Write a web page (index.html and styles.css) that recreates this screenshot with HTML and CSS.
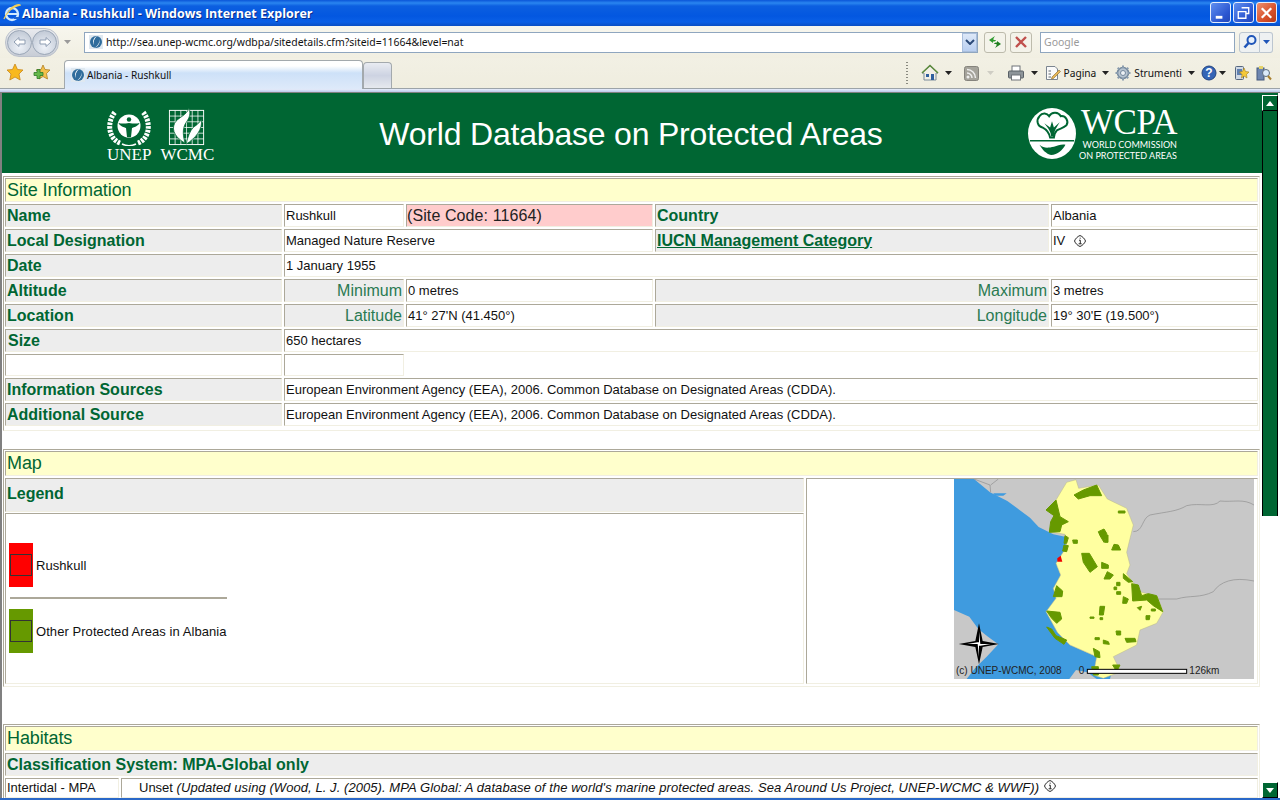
FILE: index.html
```html
<!DOCTYPE html>
<html lang="it">
<head>
<meta charset="utf-8">
<title>Albania - Rushkull - Windows Internet Explorer</title>
<link rel="stylesheet" href="styles.css">
</head>
<body>
<svg class="defs" width="0" height="0" aria-hidden="true">
  <defs>
    <symbol id="fav" viewBox="0 0 16 16">
      <rect x="1" y="1" width="14" height="14" fill="#dfe8f0"/>
      <circle cx="8" cy="8" r="6" fill="#2f6c9c"/>
      <path d="M9 2C6 5 5 8 6 11C4 8 5 4 9 2ZM11 5C12 8 10 12 6 14C9 13 13 10 11 5Z" fill="#fff"/>
    </symbol>
    <symbol id="info" viewBox="0 0 12 12">
      <path d="M6 .5C8.500 1.500 10.500 3.500 11.500 6C10.500 8.500 8.500 10.500 6 11.500C3.500 10.500 1.500 8.500 .5 6C1.500 3.500 3.500 1.500 6 .5Z" fill="#fff" stroke="#111" stroke-width=".9"/>
      <path d="M5 5.200H6.300V8.700M4.600 8.800H7.700M5.700 3.200H6.700" fill="none" stroke="#111" stroke-width=".9"/>
    </symbol>
    <symbol id="drop" viewBox="0 0 7 4"><path d="M0 0H7L3.500 4Z"/></symbol>
  </defs>
</svg>
<div class="window">
  <header class="titlebar">
    <svg class="ie" viewBox="0 0 18 18" width="18" height="18"><circle cx="9" cy="10" r="6" fill="none" stroke="#cfe9ff" stroke-width="2.400"/><path d="M3 10H15" stroke="#cfe9ff" stroke-width="2"/><path d="M1 15C3 9 10 2 17 1C15 0 11 2 7 5" fill="none" stroke="#f2cf5a" stroke-width="1.300"/><path d="M11 14H16" stroke="#1d63d0" stroke-width="2"/></svg>
    <span class="title-text">Albania - Rushkull - Windows Internet Explorer</span>
    <div class="winbtns">
      <span class="winbtn"><svg viewBox="0 0 20 20" width="20" height="20"><rect x="5" y="13" width="7" height="3" fill="#fff"/></svg></span>
      <span class="winbtn"><svg viewBox="0 0 20 20" width="20" height="20"><path d="M8 4.500H15.500V10.500H13M4.500 8.500H12.500V15.500H4.500Z" fill="none" stroke="#fff" stroke-width="1.400"/></svg></span>
      <span class="winbtn close"><svg viewBox="0 0 20 20" width="20" height="20"><path d="M5 5L15 15M15 5L5 15" stroke="#fff" stroke-width="2.400"/></svg></span>
    </div>
  </header>

  <div class="navrow">
    <div class="navpill">
      <span class="roundbtn"><svg viewBox="0 0 20 20" width="20" height="20"><path d="M4 10L9 5.500V8H15V12H9V14.500Z" fill="#fff" stroke="#8e9db2"/></svg></span>
      <span class="roundbtn"><svg viewBox="0 0 20 20" width="20" height="20"><path d="M16 10L11 5.500V8H5V12H11V14.500Z" fill="#fff" stroke="#8e9db2"/></svg></span>
    </div>
    <svg class="navdrop" width="7" height="4"><use href="#drop" fill="#9a9a9a"/></svg>
    <div class="address">
      <svg width="16" height="16"><use href="#fav"/></svg>
      <span class="url">http://sea.unep-wcmc.org/wdbpa/sitedetails.cfm?siteid=11664&amp;level=nat</span>
      <span class="addr-drop"><svg viewBox="0 0 10 6" width="10" height="6"><path d="M1 1L5 5L9 1" fill="none" stroke="#2c4a78" stroke-width="2"/></svg></span>
    </div>
    <span class="squarebtn refresh"><svg viewBox="0 0 20 18" width="20" height="18"><path d="M10 3L4 7L8 10V8.500C10 8.500 10.500 8 11 7H8.500V5.500Z" fill="#2f9a2f"/><path d="M10 15L16 11L12 8V9.500C10 9.500 9.500 10 9 11H11.500V12.500Z" fill="#1f7f1f"/></svg></span>
    <span class="squarebtn stop"><svg viewBox="0 0 20 18" width="20" height="18"><path d="M5 4L15 14M15 4L5 14" stroke="#c0504d" stroke-width="2.400"/></svg></span>
    <div class="search"><span>Google</span></div>
    <span class="searchbtn"><svg viewBox="0 0 18 18" width="18" height="18"><circle cx="10.500" cy="7" r="4" fill="#e8f1fb" stroke="#1f55b8" stroke-width="2"/><path d="M7.500 10L3.500 14.500" stroke="#1f55b8" stroke-width="2.600"/></svg></span>
    <span class="searchdrop"><svg width="7" height="4"><use href="#drop" fill="#1f55b8"/></svg></span>
  </div>

  <div class="tabrow">
    <svg class="fav-star" viewBox="0 0 18 18" width="18" height="18"><path d="M9 1L11.500 6.500L17 7L13 11L14.200 17L9 14L3.800 17L5 11L1 7L6.500 6.500Z" fill="#f9b91e" stroke="#c8861a" stroke-width=".8"/></svg>
    <svg class="add-star" viewBox="0 0 18 18" width="18" height="18"><path d="M10 2L12 6.500L17 7L13.500 10.500L14.500 16L10 13.500L6 16L7 10.500L3 7L8 6.500Z" fill="#f4c04a" stroke="#b08024" stroke-width=".8"/><path d="M1 9.500H4V6.500H7V9.500H10V12.500H7V15.500H4V12.500H1Z" fill="#66b84a" stroke="#2f7a2a" stroke-width=".8"/></svg>
    <div class="tab active">
      <svg width="16" height="16"><use href="#fav"/></svg>
      <span>Albania - Rushkull</span>
    </div>
    <div class="tab newtab"></div>
    <div class="cmdbar">
      <span class="grip"></span>
      <span class="cmd home"><svg viewBox="0 0 18 18" width="18" height="18"><path d="M1 9L9 1.500L17 9H15V16H3V9Z" fill="#f2efe6" stroke="#7c8b99"/><path d="M1 9L9 1.500L17 9" fill="none" stroke="#5b8a3c" stroke-width="1.600"/><rect x="5" y="10" width="3" height="3" fill="#2f5f9e"/><rect x="10" y="10" width="3" height="6" fill="#2f5f9e"/></svg><svg class="caret" width="7" height="4"><use href="#drop" fill="#222"/></svg></span>
      <span class="cmd rss"><svg viewBox="0 0 15 15" width="15" height="15"><rect width="14" height="14" x=".5" y=".5" rx="2" fill="#a5a39b" stroke="#85837c"/><circle cx="4" cy="11" r="1.500" fill="#eee"/><path d="M3 7A5 5 0 0 1 8 12M3 3.500A8.500 8.500 0 0 1 11.500 12" fill="none" stroke="#eee" stroke-width="1.500"/></svg><svg class="caret" width="7" height="4"><use href="#drop" fill="#cfcdc4"/></svg></span>
      <span class="cmd print"><svg viewBox="0 0 18 18" width="18" height="18"><rect x="5" y="2" width="8" height="6" fill="#fff" stroke="#6e7378"/><rect x="1.500" y="7" width="15" height="7" rx="1" fill="#8d9499" stroke="#596066"/><rect x="4.500" y="11" width="9" height="5" fill="#fff" stroke="#6e7378"/></svg><svg class="caret" width="7" height="4"><use href="#drop" fill="#222"/></svg></span>
      <span class="cmd pagecmd"><svg viewBox="0 0 16 16" width="16" height="16"><path d="M1.500 1.500H10L12.500 4V14.500H1.500Z" fill="#fafafa" stroke="#7b8590"/><path d="M3.500 6H6M3.500 9H6M3.500 12H6" stroke="#5c6670"/><path d="M7 12L14 5L15.500 6.500L8.500 13.500L6.500 14Z" fill="#e6b656" stroke="#8a6a2a" stroke-width=".6"/></svg><span class="cmd-label">Pagina</span><svg class="caret" width="7" height="4"><use href="#drop" fill="#222"/></svg></span>
      <span class="cmd tools"><svg viewBox="0 0 16 16" width="16" height="16"><circle cx="8" cy="8" r="5.500" fill="#b7c4d1" stroke="#74889c" stroke-width="1.500"/><circle cx="8" cy="8" r="2.500" fill="#eef2f6" stroke="#74889c"/><path d="M8 .5V3M8 13V15.500M.5 8H3M13 8H15.500M2.700 2.700L4.400 4.400M11.600 11.600L13.300 13.300M13.300 2.700L11.600 4.400M4.400 11.600L2.700 13.300" stroke="#8a9cae" stroke-width="2"/></svg><span class="cmd-label">Strumenti</span><svg class="caret" width="7" height="4"><use href="#drop" fill="#222"/></svg></span>
      <span class="cmd help"><svg viewBox="0 0 16 16" width="16" height="16"><circle cx="8" cy="8" r="7" fill="#3565b6" stroke="#23437e"/><text x="8" y="12" text-anchor="middle" class="help-q">?</text></svg><svg class="caret" width="7" height="4"><use href="#drop" fill="#222"/></svg></span>
      <span class="cmd ext"><svg viewBox="0 0 16 16" width="16" height="16"><rect x="1.500" y="1.500" width="8" height="13" rx="1" fill="#cfd8e4" stroke="#56677f"/><rect x="3" y="4" width="5" height="6" fill="#5f7fb0"/><path d="M10 3L11.500 6.500L15 7L12.500 9.500L13 13L10 11L7.500 13L8 9.500L5.500 7L8.500 6.500Z" fill="#f5c93a" stroke="#a57f1c" stroke-width=".6"/></svg></span>
      <span class="cmd ext ext2"><svg viewBox="0 0 16 16" width="16" height="16"><rect x="1" y="3" width="7" height="12" fill="#6e86b0" stroke="#45597c"/><rect x="3" y="1" width="4" height="3" fill="#e5d36a"/><circle cx="10" cy="8" r="3.500" fill="#dbeafa" stroke="#5c6c7e"/><path d="M12 11L15 14.500" stroke="#a9802f" stroke-width="2"/></svg></span>
    </div>
  </div>
  <div class="tabline"></div>

  <div class="viewport">
    <main class="content">
      <div class="banner">
        <div class="logos-left">
          <div class="logo-unep">
            <svg viewBox="0 0 44 38" width="44" height="38">
              <path d="M13 35C2 31 -1 15 8 4" fill="none" stroke="#fff" stroke-width="5" stroke-dasharray="2.600 1.100"/>
              <path d="M31 35C42 31 45 15 36 4" fill="none" stroke="#fff" stroke-width="5" stroke-dasharray="2.600 1.100"/>
              <circle cx="22" cy="18" r="11.500" fill="#fff"/>
              <circle cx="22" cy="11.500" r="2.200" fill="#006633"/>
              <path d="M11.500 15C15 16 18 15.500 22 15C26 15.500 29 16 32.500 15C31 18.500 27 19 25 20L24 29H20L19 20C17 19 13 18.500 11.500 15Z" fill="#006633"/>
              <path d="M15 36C19 38 25 38 29 36" fill="none" stroke="#fff" stroke-width="1.600"/>
            </svg>
            <span>UNEP</span>
          </div>
          <div class="logo-wcmc">
            <svg viewBox="0 -2 38 40" width="38" height="38">
              <rect x=".5" y=".5" width="36" height="36" fill="none" stroke="#fff"/>
              <path d="M.5 6.500H36.500M.5 12.500H36.500M.5 18.500H36.500M.5 24.500H36.500M.5 30.500H36.500M6.500 .5V36.500M12.500 .5V36.500M18.500 .5V36.500M24.500 .5V36.500M30.500 .5V36.500" stroke="#fff" stroke-width=".8"/>
              <path d="M21 -2C24 6 20 10 17 15C14 21 15 28 17 35C8 30 2 22 6 14C9 8 19 6 21 -2Z" fill="#fff" stroke="#006633" stroke-width=".8"/>
              <path d="M34 10C36 20 28 30 18 36C20 28 22 22 26 18C29 16 32 14 34 10Z" fill="#fff" stroke="#006633" stroke-width=".8"/>
            </svg>
            <span>WCMC</span>
          </div>
        </div>
        <h1>World Database on Protected Areas</h1>
        <div class="logo-wcpa">
          <svg viewBox="0 0 50 50" width="48" height="51" preserveAspectRatio="none"><circle cx="25" cy="25" r="25" fill="#fff"/><path d="M23 29C22 24 19 21 15 19C10 18 8 12 12 8C15 4 20 5 22 8C25 3 32 4 34 8C39 7 43 13 40 17C37 20 33 20 30 22C28 24 27 26 27 29Z" fill="none" stroke="#006633" stroke-width="2"/><path d="M24 28C24 23 21 20 17 15L23 19L25 13L27 19L33 14C30 19 27 22 27 28Z" fill="#006633"/><path d="M2 32H48" stroke="#006633" stroke-width="1.500"/><path d="M12 36C17 40 21 39 27 38C31 37 35 35 39 36C36 41 31 46 24 46C19 45 15 41 12 36Z" fill="#006633"/></svg>
          <div class="wcpa-text">
            <span class="wcpa-big">WCPA</span>
            <span class="wcpa-small">WORLD COMMISSION</span>
            <span class="wcpa-small">ON PROTECTED AREAS</span>
          </div>
        </div>
      </div>

      <section class="panel info-panel">
        <h2 class="cell band span-all">Site Information</h2>
        <div class="cell label">Name</div>
        <div class="cell val">Rushkull</div>
        <div class="cell code">(Site Code: 11664)</div>
        <div class="cell label">Country</div>
        <div class="cell val">Albania</div>

        <div class="cell label">Local Designation</div>
        <div class="cell val span-2">Managed Nature Reserve</div>
        <div class="cell label"><a href="#iucn">IUCN Management Category</a></div>
        <div class="cell val">IV <svg class="info-ic" width="12" height="12"><use href="#info"/></svg></div>

        <div class="cell label">Date</div>
        <div class="cell val span-4">1 January 1955</div>

        <div class="cell label">Altitude</div>
        <div class="cell sub">Minimum</div>
        <div class="cell val">0 metres</div>
        <div class="cell sub">Maximum</div>
        <div class="cell val">3 metres</div>

        <div class="cell label">Location</div>
        <div class="cell sub">Latitude</div>
        <div class="cell val">41° 27'N (41.450°)</div>
        <div class="cell sub">Longitude</div>
        <div class="cell val">19° 30'E (19.500°)</div>

        <div class="cell label size-label">Size</div>
        <div class="cell val span-4">650 hectares</div>

        <div class="cell val blank"></div>
        <div class="cell val blank"></div>

        <div class="cell label row-start">Information Sources</div>
        <div class="cell val span-4">European Environment Agency (EEA), 2006. Common Database on Designated Areas (CDDA).</div>

        <div class="cell label">Additional Source</div>
        <div class="cell val span-4">European Environment Agency (EEA), 2006. Common Database on Designated Areas (CDDA).</div>
      </section>

      <section class="panel map-panel">
        <h2 class="cell band map-band">Map</h2>
        <div class="map-left">
          <div class="cell label legend-head">Legend</div>
          <div class="cell legend-box">
            <div class="legend">
              <div class="legend-row">
                <span class="swatch red"><i></i></span>
                <span>Rushkull</span>
              </div>
              <div class="legend-rule"></div>
              <div class="legend-row">
                <span class="swatch green"><i></i></span>
                <span>Other Protected Areas in Albania</span>
              </div>
            </div>
          </div>
        </div>
        <div class="cell map-cell">
          <svg class="map" viewBox="12 12 900 600" width="300" height="200">
            <rect x="12" y="12" width="900" height="600" fill="#c8c8c8"/>
            <path d="M12 12H72L120 52L172 78L240 128L266 156L310 178L345 185L348 225L320 270L332 300L315 400L325 475L360 510L440 545L490 570L480 612H12Z" fill="#3f9bdf"/>
            <path d="M12 405L58 425L85 462L112 484L145 508L110 545L75 580L50 612H12Z" fill="#c8c8c8"/>
            <path d="M358 612L378 585L412 592L440 612Z" fill="#c8c8c8"/>
            <path d="M130 55H170L160 62H135Z" fill="#3f9bdf"/>
            <path d="M72 12L120 30L122 52M145 12L122 30M550 170C580 170 575 130 600 120C650 110 680 110 710 92C750 82 790 100 810 78C850 82 880 70 912 90M625 372H680C720 360 750 370 790 350C810 320 850 305 912 318" fill="none" stroke="#8e8e8e" stroke-width="2"/>
            <path d="M318 75L350 22L378 14L386 40L445 30L472 72L530 100L550 150L530 232L540 270L530 296L570 350L622 365L640 410L620 445L570 465L560 510L490 545L512 590L460 610L430 600L440 545L360 510L322 472L288 410L318 370L310 340L332 300L318 265L350 215L345 178L298 170L312 120L288 105Z" fill="#ffffa0" stroke="#b9b98a" stroke-width="1.500"/>
            <g class="pa">
              <path d="M372 60L400 45L440 30L455 62L420 62L385 72Z"/>
              <path d="M288 105L318 75L330 125L355 140L335 150L330 170L298 172L302 140L312 122Z"/>
              <path d="M345 182L355 188L350 205L342 205ZM342 210L355 212L350 230L338 228Z"/>
              <path d="M445 170L462 162L470 175L462 202L450 182Z"/>
              <path d="M368 195H382V205H370Z"/>
              <path d="M492 208L505 210L512 225L485 225Z"/>
              <path d="M395 235L418 235L442 275L420 292L400 262Z"/>
              <path d="M455 262L475 270L475 280L455 280Z"/>
              <path d="M472 290L490 300L480 312L462 312Z"/>
              <path d="M520 296L548 320L535 322L520 310Z"/>
              <path d="M545 326L565 330L575 362L595 356L620 362L638 410L610 392L590 375L548 378Z"/>
              <path d="M320 332L338 348L336 365L310 365Z"/>
              <path d="M290 408L330 412L335 432L320 445L305 430Z"/>
              <path d="M290 456L305 462L318 482L350 495L342 508L315 490Z"/>
              <path d="M450 394L464 394L460 420H448Z"/>
              <path d="M520 365L535 372L530 385L518 385Z"/>
              <path d="M525 490L555 490L558 500L530 502Z"/>
              <path d="M460 495L475 500L478 508L460 506Z"/>
              <path d="M430 520L448 530L450 548L435 545Z"/>
              <path d="M498 468H512V480H500Z"/>
              <path d="M588 422L600 422L598 434H588Z"/>
              <path d="M425 575H445V600H430ZM488 570H510L500 590Z"/>
              <path d="M500 322H510V332H500ZM492 336H500V344H492ZM500 350H512V358H500ZM435 488H448V494H435ZM562 398L575 394L570 406ZM604 402H616V408H604ZM420 426H432V430H420ZM450 428H458V434H450ZM505 108H525V114H505ZM468 180H474V202H464Z"/>
            </g>
            <path d="M322 250L332 242L337 260H322Z" fill="#ee0000"/>
            <path d="M87 445L98 498L147 507L98 516L87 568L76 516L26 507L76 498Z" fill="#000"/>
            <path d="M87 470L91 507H122L91 512H87ZM87 545L83 507H52L83 502H87Z" fill="#fff"/>
            <rect x="412" y="583" width="298" height="12" fill="#fff" stroke="#000" stroke-width="3"/>
            <text x="18" y="597" class="map-text">(c) UNEP-WCMC, 2008</text>
            <text x="386" y="597" class="map-text">0</text>
            <text x="718" y="597" class="map-text">126km</text>
          </svg>
        </div>
      </section>

      <section class="panel hab-panel">
        <h2 class="cell band">Habitats</h2>
        <div class="cell label class-head">Classification System: MPA-Global only</div>
        <div class="hab-row">
          <div class="cell val hab-name">Intertidal - MPA</div>
          <div class="cell val hab-desc">Unset <em>(Updated using (Wood, L. J. (2005). MPA Global: A database of the world's marine protected areas. Sea Around Us Project, UNEP-WCMC &amp; WWF))</em> <svg class="info-ic" width="12" height="12"><use href="#info"/></svg></div>
        </div>
      </section>
    </main>
    <aside class="scrollbar">
      <span class="sb-btn"><svg viewBox="0 0 8 5" width="8" height="5"><path d="M0 5H8L4 0Z" fill="#fff"/></svg></span>
      <span class="sb-thumb"></span>
      <span class="sb-rest"></span>
      <span class="sb-btn"><svg viewBox="0 0 8 5" width="8" height="5"><path d="M0 0H8L4 5Z" fill="#fff"/></svg></span>
    </aside>
  </div>
</div>
</body>
</html>
```

FILE: styles.css
```css
* { box-sizing: border-box; }
html, body { margin: 0; padding: 0; height: 100%; overflow: hidden; background: #fff; }
body { font-family: "Liberation Sans", Arial, sans-serif; font-size: 13px; color: #111; }
.defs { position: absolute; }
.window { width: 1280px; height: 800px; display: flex; flex-direction: column; overflow: hidden; border-bottom: 2px solid #2a68c8; }

.titlebar { height: 26px; flex: none; display: flex; align-items: center; padding: 0 3px; background: linear-gradient(#0a55d8 0, #2a86f0 3px, #0c5fe0 6px, #0357e0 16px, #0a5fe6 22px, #0a4fc4 26px); }
.ie { flex: none; }
.title-text { margin-left: 1px; font-family: "Open Sans", "DejaVu Sans", sans-serif; font-weight: 700; font-size: 12.5px; color: #fff; text-shadow: 1px 1px 0 #0a2f8c; white-space: nowrap; }
.winbtns { margin-left: auto; display: flex; gap: 2px; margin-top: -1px; }
.winbtn { width: 21px; height: 21px; border: 1px solid #e6eefc; border-radius: 3px; background: linear-gradient(135deg, #5f8ff0, #2a55d0 70%, #2448b8); display: flex; align-items: center; justify-content: center; }
.winbtn.close { background: linear-gradient(135deg, #ec9070, #d8502a 60%, #b83a18); }

.navrow { height: 32px; flex: none; display: flex; align-items: center; padding: 1px 7px 1px 5px; background: linear-gradient(#f7f6ee, #f1efe2); }
.navpill { display: flex; padding: 1px; border-radius: 14px; background: linear-gradient(#e8eaee, #c8cdd6); border: 1px solid #bcc2cc; }
.roundbtn { width: 25px; height: 25px; border-radius: 50%; border: 1px solid #9aa6b6; background: radial-gradient(circle at 50% 70%, #eef2f8, #c3cbd7 80%); display: flex; align-items: center; justify-content: center; }
.navdrop { margin: 0 13px 0 5px; flex: none; }
.address { width: 894px; height: 21px; flex: none; display: flex; align-items: center; padding-left: 3px; background: #fff; border: 1px solid #8fa6bf; }
.url { margin-left: 2px; font-family: "Noto Sans", "DejaVu Sans", sans-serif; font-size: 10.45px; color: #111; white-space: nowrap; }
.addr-drop { margin-left: auto; width: 15px; height: 19px; background: linear-gradient(#dde8f8, #b9cff0); border: 1px solid #a9bedc; display: flex; align-items: center; justify-content: center; }
.squarebtn { width: 22px; height: 21px; flex: none; border: 1px solid #bdbbac; border-radius: 3px; background: #f4f3ea; display: flex; align-items: center; justify-content: center; }
.refresh { margin-left: 6px; }
.stop { margin-left: 4px; }
.search { width: 195px; height: 21px; margin-left: 8px; flex: none; display: flex; align-items: center; padding-left: 3px; background: #fff; border: 1px solid #8fa6bf; font-family: "Noto Sans", sans-serif; font-size: 10.5px; color: #9a9a9a; }
.searchbtn { width: 21px; height: 21px; margin-left: 4px; flex: none; border: 1px solid #bcc6d0; border-radius: 3px 0 0 3px; background: #eef1f2; display: flex; align-items: center; justify-content: center; }
.searchdrop { width: 13px; height: 21px; flex: none; border: 1px solid #bcc6d0; border-left: 0; border-radius: 0 3px 3px 0; background: #eef1f2; display: flex; align-items: center; justify-content: center; }

.tabrow { height: 31px; flex: none; display: flex; align-items: flex-end; padding: 0 8px 0 5px; background: linear-gradient(#f2f0e4, #efeddf); border-bottom: 1px solid #9ca3a8; }
.fav-star { margin: 0 9px 7px 1px; flex: none; }
.add-star { margin: 0 13px 7px 0; flex: none; }
.tab { flex: none; border: 1px solid #a3a9ad; border-bottom: 0; border-radius: 4px 4px 0 0; }
.tab.active { width: 299px; height: 29px; margin-bottom: -1px; display: flex; align-items: center; padding-left: 5px; gap: 1px; background: linear-gradient(#fff 0, #fff 5px, #cde1f8 12px, #dfeafa 29px); font-family: "Noto Sans", sans-serif; font-size: 10.1px; color: #111; position: relative; z-index: 1; }
.tab.newtab { width: 29px; height: 26px; background: linear-gradient(#e9ecf2, #cdd3e2 50%, #e6e9ee); }
.tabline { height: 3px; flex: none; background: linear-gradient(#e8eefb, #b9c8ea); }
.cmdbar { margin-left: auto; height: 30px; align-self: flex-start; display: flex; align-items: center; color: #111; }
.grip { width: 2px; height: 22px; margin-right: 13px; background-image: linear-gradient(#8a8a80 50%, transparent 50%); background-size: 2px 3px; }
.cmd { display: flex; align-items: center; }
.cmd-label { font-family: "Noto Sans", sans-serif; font-size: 10.2px; margin: 0 6px 0 3px; white-space: nowrap; }
.caret { flex: none; }
.home .caret { margin-left: 6px; }
.rss { margin-left: 12px; }
.rss .caret { margin-left: 8px; }
.print { margin-left: 13px; }
.print .caret { margin-left: 6px; }
.pagecmd { margin-left: 7px; }
.tools { margin-left: 6px; }
.help { margin-left: 6px; }
.help .caret { margin-left: 2px; }
.ext { margin-left: 8px; }
.ext2 { margin-left: 6px; }
.help-q { font-family: "Liberation Sans", sans-serif; font-weight: 700; font-size: 12px; fill: #fff; }

.viewport { flex: 1; min-height: 0; display: flex; background: #fff; border-left: 2px solid #808080; border-top: 1px solid #808080; position: relative; }
.content { width: 1260px; flex: none; overflow: hidden; }

.banner { height: 80px; background: #006633; display: grid; grid-template-columns: 1fr auto 1fr; align-items: center; }
.banner h1 { margin: 2px 2px 0 0; font-weight: 400; font-size: 32px; letter-spacing: -.2px; line-height: 36px; color: #fff; white-space: nowrap; }
.logos-left { display: flex; gap: 9px; padding-left: 105px; margin-top: 4px; }
.logo-unep, .logo-wcmc { display: flex; flex-direction: column; align-items: center; gap: 2px; color: #fff; font-family: "Liberation Serif", serif; font-size: 17px; line-height: 14px; }
.logo-wcpa { justify-self: end; display: flex; align-items: center; gap: 5px; color: #fff; padding-right: 85px; margin-top: 1px; }
.wcpa-text { display: flex; flex-direction: column; align-items: flex-end; width: 96px; }
.wcpa-big { font-family: "Liberation Serif", serif; font-size: 35px; line-height: 32px; letter-spacing: -.5px; }
.wcpa-small { font-family: "Lato", sans-serif; font-size: 9px; line-height: 11px; white-space: nowrap; }

.panel { width: 1257px; margin-left: 1px; border: 1px solid; border-color: #aca899 #f1efe2 #f1efe2 #aca899; padding: 1px; }
.cell { border: 1px solid; border-color: #aca899 #f1efe2 #f1efe2 #aca899; margin: 0; min-width: 0; display: flex; align-items: center; padding: 0 1px; }
.band { height: 25px; background: #ffffcc; color: #006633; font-size: 18px; letter-spacing: -.1px; font-weight: 400; }
.label { background: #ededed; color: #006633; font-size: 16px; font-weight: 700; }
.label a { color: #006633; }
.size-label { padding-left: 2px; }
.val { background: #fff; color: #111; font-size: 13px; white-space: pre-wrap; }
.sub { background: #ededed; color: #2a7a52; font-size: 16px; justify-content: flex-end; }
.code { background: #ffcccc; color: #222; font-size: 16px; letter-spacing: .1px; padding-left: 0; }
.info-ic { margin-left: 5px; flex: none; }

.info-panel { margin-top: 3px; height: 255px; display: grid; grid-template-columns: 277px 120px 247px 394px 207px; grid-template-rows: 24px repeat(6, 23px) 22px 23px 23px; align-content: start; gap: 2px; }
.span-all { grid-column: 1 / -1; height: 24px; }
.span-2 { grid-column: span 2; }
.span-4 { grid-column: span 4; }
.row-start { grid-column: 1; }

.map-panel { margin-top: 18px; height: 238px; display: grid; grid-template-columns: 799px 452px; grid-template-rows: 25px 206px; gap: 2px; }
.map-band { grid-column: 1 / -1; }
.map-left { display: flex; flex-direction: column; gap: 1px; min-height: 0; }
.legend-head { height: 34px; flex: none; padding-bottom: 2px; }
.legend-box { height: 171px; flex: none; align-items: flex-start; padding: 29px 0 0 3px; background: #fff; }
.legend { display: flex; flex-direction: column; letter-spacing: .06px; }
.legend-row { display: flex; align-items: center; gap: 3px; height: 44px; }
.legend-rule { height: 2px; background: #aca899; margin: 10px 0 10px 1px; }
.swatch { width: 24px; height: 44px; flex: none; display: flex; align-items: center; justify-content: center; }
.swatch i { display: block; width: 22px; height: 22px; border: 1px solid #333; }
.swatch.red { background: #ff0000; }
.swatch.green { background: #669900; }
.map-cell { padding: 0 3px 0 0; justify-content: flex-end; align-items: flex-start; background: #fff; }
.map { display: block; }
.pa { fill: #669900; stroke: #669900; stroke-width: 3; stroke-linejoin: round; }
.map-text { font-family: "Liberation Sans", sans-serif; font-size: 30px; fill: #222; }

.hab-panel { margin-top: 37px; display: flex; flex-direction: column; gap: 2px; }
.class-head { height: 23px; }
.hab-row { display: flex; gap: 2px; }
.hab-name { width: 114px; height: 20px; flex: none; align-items: flex-start; padding-top: 1px; }
.hab-desc { flex: 1; height: 20px; padding: 1px 1px 0 17px; align-items: flex-start; }
.hab-desc em { letter-spacing: .07px; }

.scrollbar { width: 16px; flex: none; display: flex; flex-direction: column; background: #006633; padding-top: 2px; }
.sb-btn { height: 16px; flex: none; background: #006633; border: 1px solid; border-color: #fff #000 #000 #fff; display: flex; align-items: center; justify-content: center; }
.sb-thumb { height: 405px; flex: none; background: #006633; border-left: 1px solid #000; border-right: 1px solid #000; }
.sb-rest { flex: 1; background: #fff; }
```
